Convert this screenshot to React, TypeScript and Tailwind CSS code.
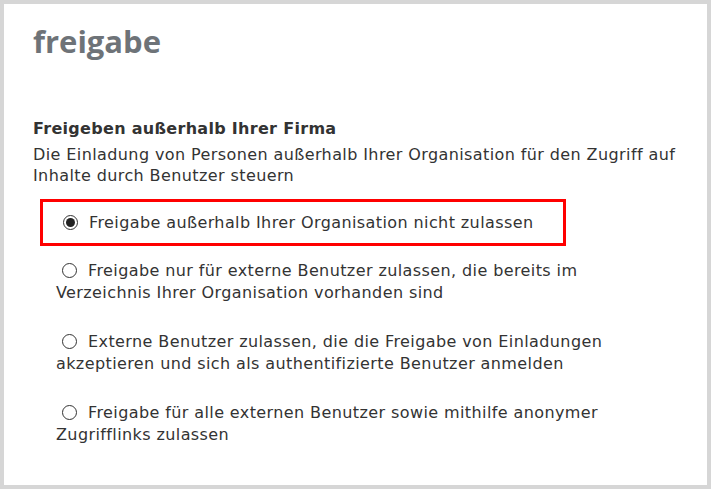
const options = [
  'Freigabe nur für externe Benutzer zulassen, die bereits im Verzeichnis Ihrer Organisation vorhanden sind',
  'Externe Benutzer zulassen, die die Freigabe von Einladungen akzeptieren und sich als authentifizierte Benutzer anmelden',
  'Freigabe für alle externen Benutzer sowie mithilfe anonymer Zugrifflinks zulassen',
];

function Radio({ checked }: { checked?: boolean }) {
  return (
    <span className="inline-flex h-[15px] w-[15px] items-center justify-center rounded-full border border-[#333] bg-white align-[-2px]">
      {checked && <span className="h-[9px] w-[9px] rounded-full bg-[#222]" />}
    </span>
  );
}

export default function App() {
  return (
    <div className="h-[489px] w-[711px] bg-[#d6d6d6] p-[4px]">
      <div className="h-full w-full bg-white pl-[29px] pt-[15px] text-[#333] tracking-[0.4px] [font-family:'DejaVu_Sans',Verdana,sans-serif]">
        <h1 className="text-[31px] font-bold leading-[44px] tracking-normal text-[#6e7378] [font-family:'Open_Sans',sans-serif]">freigabe</h1>

        <h2 className="mt-[55px] text-[16px] font-bold leading-[22px] tracking-[0.3px]">Freigeben außerhalb Ihrer Firma</h2>
        <p className="mt-[4px] w-[660px] text-[16px] leading-[21px]">
          Die Einladung von Personen außerhalb Ihrer Organisation für den Zugriff auf Inhalte durch Benutzer steuern
        </p>

        <div className="ml-[7px] mt-[13px] flex h-[47px] w-[526px] items-center border-[3px] border-[#ff0000] pl-[20px] text-[16px]">
          <Radio checked />
          <span className="ml-[11px]">Freigabe außerhalb Ihrer Organisation nicht zulassen</span>
        </div>

        <div className="mt-[14px] flex flex-col gap-[27px] pl-[23px]">
          {options.map((o) => (
            <p key={o} className="w-[560px] text-[16px] leading-[22px]">
              <span className="ml-[6px] mr-[11px]">
                <Radio />
              </span>
              {o}
            </p>
          ))}
        </div>
      </div>
    </div>
  );
}
